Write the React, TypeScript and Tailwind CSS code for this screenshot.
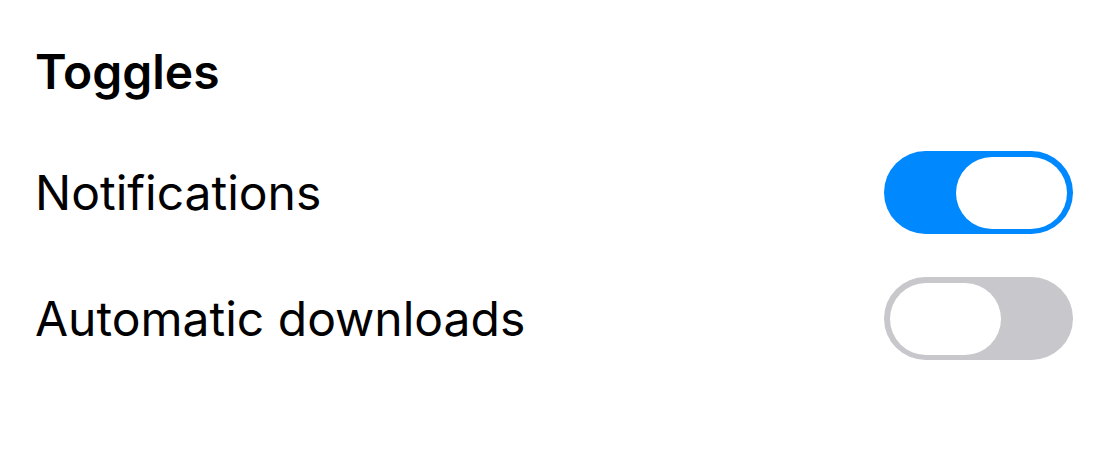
import { useState } from 'react';

interface ToggleProps {
  checked: boolean;
  onChange: (v: boolean) => void;
}

function Toggle({ checked, onChange }: ToggleProps) {
  return (
    <button
      type="button"
      role="switch"
      aria-checked={checked}
      onClick={() => onChange(!checked)}
      className={`flex h-[83px] w-[189px] shrink-0 items-center rounded-full p-[6px] ${
        checked ? 'justify-end bg-[#0088ff]' : 'justify-start bg-[#c7c7cc]'
      }`}
    >
      <span className="block h-[72px] w-[111px] rounded-full bg-white" />
    </button>
  );
}

export default function App() {
  const [notifications, setNotifications] = useState(true);
  const [downloads, setDownloads] = useState(false);

  return (
    <div className="h-[450px] w-[1100px] bg-white pl-[35px] pr-[27px] pt-[43px] font-['Inter',sans-serif] text-black">
      <h2 className="text-[48px] font-semibold leading-[58px]">Toggles</h2>

      <div className="mt-[50px] flex items-center justify-between">
        <span className="text-[48px] leading-[83px]">Notifications</span>
        <Toggle checked={notifications} onChange={setNotifications} />
      </div>

      <div className="mt-[43px] flex items-center justify-between">
        <span className="text-[48px] leading-[83px]">Automatic downloads</span>
        <Toggle checked={downloads} onChange={setDownloads} />
      </div>
    </div>
  );
}
